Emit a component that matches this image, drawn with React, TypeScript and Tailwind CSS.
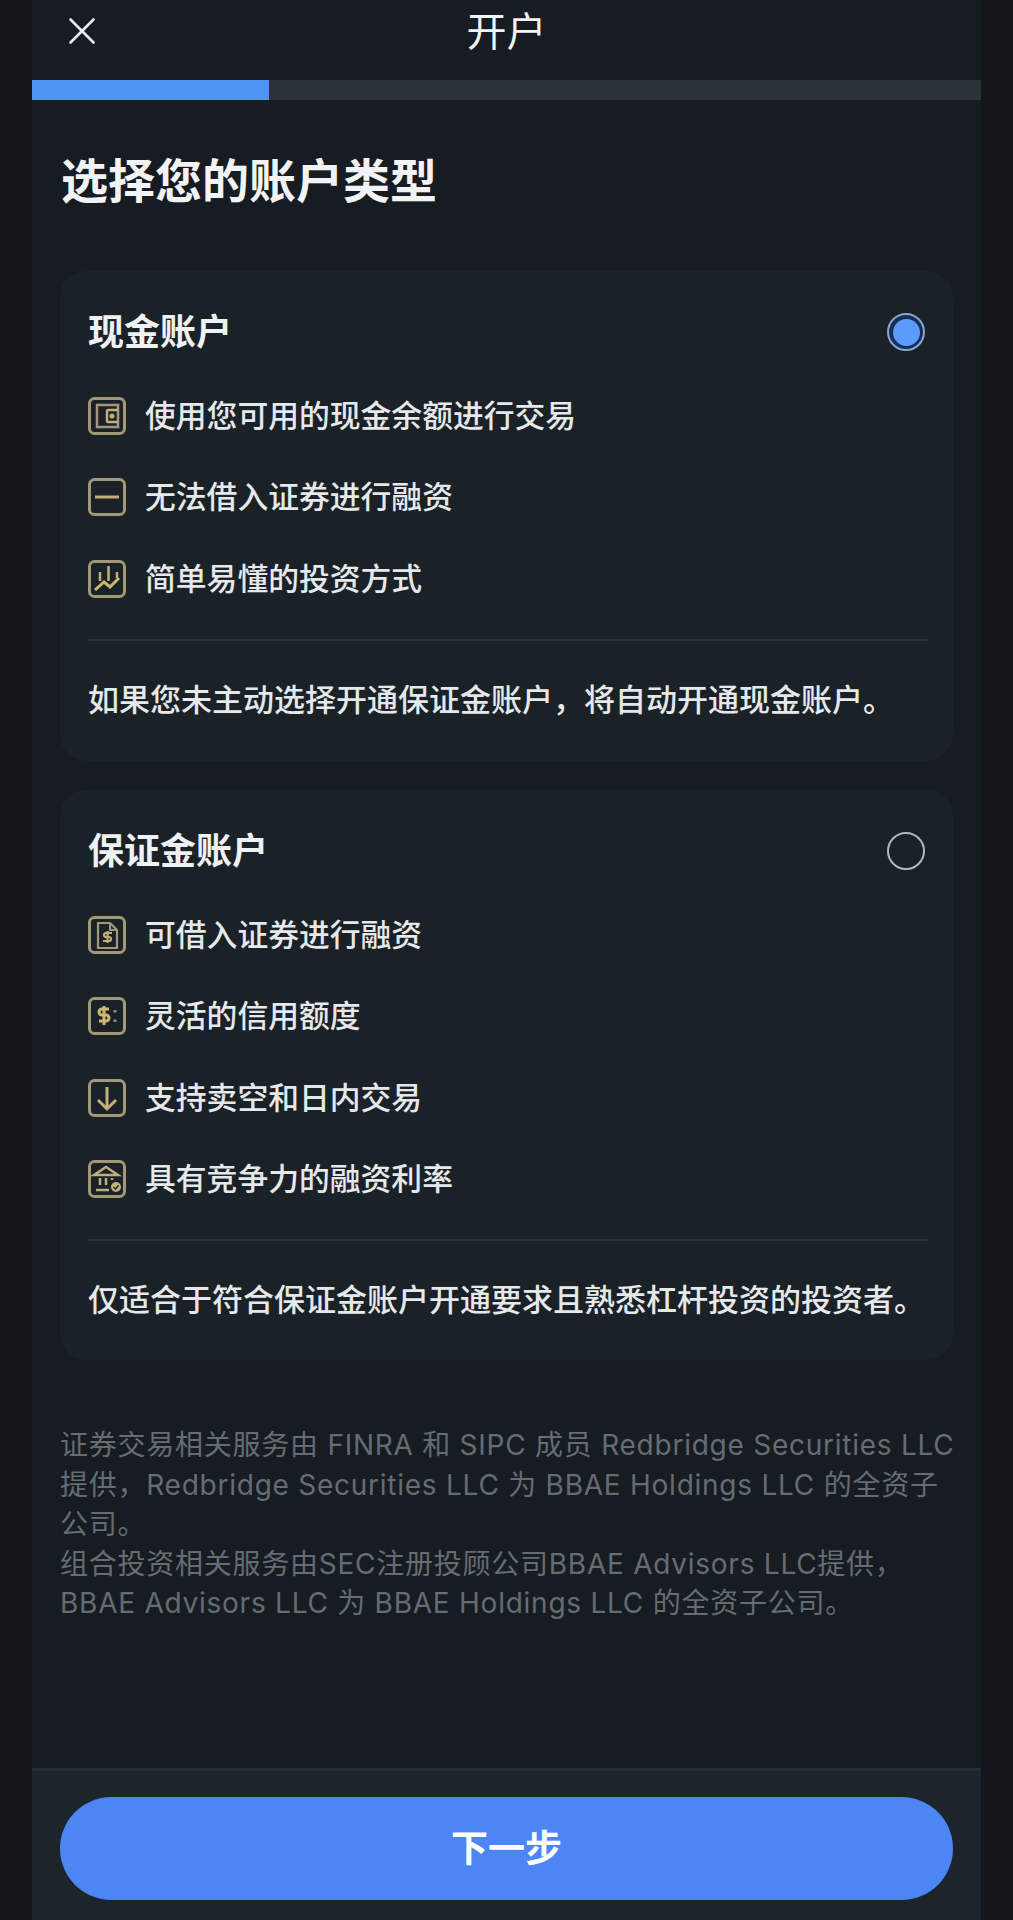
import { ReactNode } from 'react';
import { X } from 'lucide-react';

const gold = '#c2ae7c';

function IconBox({ children }: { children: ReactNode }) {
  return (
    <svg width="38" height="38" viewBox="0 0 38 38" fill="none" stroke={gold} strokeWidth="2.500" className="shrink-0">
      <rect x="1.500" y="1.500" width="35" height="35" rx="5" stroke="#a3977a" strokeWidth="3" />
      {children}
    </svg>
  );
}

const WalletIcon = () => (
  <IconBox>
    <path d="M30 8H9v22h21Z" stroke="#a3977a" />
    <path d="M30 13H20a1 1 0 0 0-1 1v10a1 1 0 0 0 1 1h10" />
    <circle cx="24" cy="19" r="1.800" fill={gold} strokeWidth="1.500" />
  </IconBox>
);
const MinusIcon = () => (
  <IconBox>
    <path d="M7 19h24" strokeWidth="3" />
  </IconBox>
);
const ChartIcon = () => (
  <IconBox>
    <path d="M12 12v9M20.500 6v15M29 12v6" strokeWidth="2.500" />
    <path d="M7 30l9-8 6 5 9-9" strokeWidth="3" stroke="#d0b76f" />
  </IconBox>
);
const FileDollarIcon = () => (
  <IconBox>
    <path d="M10 7h12l7 7v18H10Z" strokeWidth="2.200" stroke="#a3977a" />
    <path d="M22 7v7h7" strokeWidth="2" stroke="#a3977a" />
    <path d="M24 17h-6a2 2 0 0 0 0 4h3a2 2 0 0 1 0 4h-6M19.500 15v12" strokeWidth="2.200" />
  </IconBox>
);
const DollarDotsIcon = () => (
  <IconBox>
    <path d="M21 12h-7a2.500 2.500 0 0 0 0 6h4a2.500 2.500 0 0 1 0 6h-7" strokeWidth="3" stroke="#d0b76f" />
    <path d="M16 9v19" strokeWidth="3" stroke="#d0b76f" />
    <path d="M27 13v2.500M27 22.500V25" strokeWidth="3" stroke="#8d8a80" />
  </IconBox>
);
const ArrowDownIcon = () => (
  <IconBox>
    <path d="M19 8v22M10 21l9 9 9-9" strokeWidth="3" />
  </IconBox>
);
const BankIcon = () => (
  <IconBox>
    <path d="M6 15l12-8 12 8Z" strokeWidth="2.500" />
    <path d="M12 18v7M18 18v7M24 18v2M8 30h13" strokeWidth="2.500" />
    <circle cx="28" cy="27" r="5" fill={gold} stroke="none" />
    <path d="M25.500 27l2 2 3-3.500" stroke="#1a2228" strokeWidth="1.300" />
  </IconBox>
);

function Feature({ icon, text }: { icon: ReactNode; text: string }) {
  return (
    <div className="flex items-center gap-[19px] h-[81.500px]">
      {icon}
      <span className="text-[#e6e8ea] text-[30.800px] font-medium">{text}</span>
    </div>
  );
}

function AccountCard({
  title,
  selected,
  features,
  note,
  className,
}: {
  title: string;
  selected?: boolean;
  features: { icon: ReactNode; text: string }[];
  note: string;
  className: string;
}) {
  return (
    <div className={`mx-[28px] rounded-[26px] bg-[#1a2228] px-[28px] ${className}`}>
      <div className="flex items-center justify-between h-[122px]">
        <span className="text-[36px] font-bold text-[#f0f1f2]">{title}</span>
        {selected ? (
          <span className="flex items-center justify-center w-[38px] h-[38px] rounded-full border-2 border-[#8ea4cc] bg-[#143058]">
            <span className="w-[27px] h-[27px] rounded-full bg-[#5c9bfb]" />
          </span>
        ) : (
          <span className="w-[38px] h-[38px] rounded-full border-2 border-[#b4b8bb]" />
        )}
      </div>
      <div className="-mt-[18px]">
        {features.map((f) => (
          <Feature key={f.text} icon={f.icon} text={f.text} />
        ))}
      </div>
      <div className="mt-[19px] -mr-[3px] border-t-2 border-[#2b3339]" />
      <p className="pt-[37px] text-[31px] leading-[44px] font-medium text-[#e6e8ea] whitespace-nowrap">{note}</p>
    </div>
  );
}

export default function App() {
  return (
    <div className="w-[1013px] h-[1920px] overflow-hidden bg-[#14161c] px-[32px] font-['Inter','Noto_Sans_CJK_SC',sans-serif]">
      <div className="flex flex-col h-full bg-[#161c21]">
        <div className="relative flex items-center justify-center h-[80px] pb-[16px]">
          <X className="absolute left-[27px] top-[8px]" size={46} strokeWidth={1.400} color="#e8e9ea" />
          <span className="text-[40px] text-[#f2f3f4]">开户</span>
        </div>
        <div className="h-[20px] bg-[#2b3238]">
          <div className="w-[237px] h-full bg-[#5094f2]" />
        </div>

        <h1 className="mt-[54px] ml-[29px] text-[47px] leading-[54px] font-bold text-[#f2f3f4]">选择您的账户类型</h1>

        <AccountCard
          className="mt-[63px] h-[490px]"
          title="现金账户"
          selected
          features={[
            { icon: <WalletIcon />, text: '使用您可用的现金余额进行交易' },
            { icon: <MinusIcon />, text: '无法借入证券进行融资' },
            { icon: <ChartIcon />, text: '简单易懂的投资方式' },
          ]}
          note="如果您未主动选择开通保证金账户，将自动开通现金账户。"
        />
        <AccountCard
          className="mt-[29px] h-[570px]"
          title="保证金账户"
          features={[
            { icon: <FileDollarIcon />, text: '可借入证券进行融资' },
            { icon: <DollarDotsIcon />, text: '灵活的信用额度' },
            { icon: <ArrowDownIcon />, text: '支持卖空和日内交易' },
            { icon: <BankIcon />, text: '具有竞争力的融资利率' },
          ]}
          note="仅适合于符合保证金账户开通要求且熟悉杠杆投资的投资者。"
        />

        <p className="mt-[66px] ml-[28px] text-[28px] leading-[39.500px] tracking-[0.750px] text-[#656c72] whitespace-nowrap">
          证券交易相关服务由 FINRA 和 SIPC 成员 Redbridge Securities LLC
          <br />
          提供，Redbridge Securities LLC 为 BBAE Holdings LLC 的全资子
          <br />
          公司。
          <br />
          组合投资相关服务由SEC注册投顾公司BBAE Advisors LLC提供，
          <br />
          BBAE Advisors LLC 为 BBAE Holdings LLC 的全资子公司。
        </p>

        <div className="mt-auto h-[152px] border-t-[3px] border-[#262e34] bg-[#1c252b] px-[28px] pt-[26px]">
          <button className="w-full h-[103px] rounded-full bg-[#4c86f5] text-[37px] font-bold text-white">下一步</button>
        </div>
      </div>
    </div>
  );
}
